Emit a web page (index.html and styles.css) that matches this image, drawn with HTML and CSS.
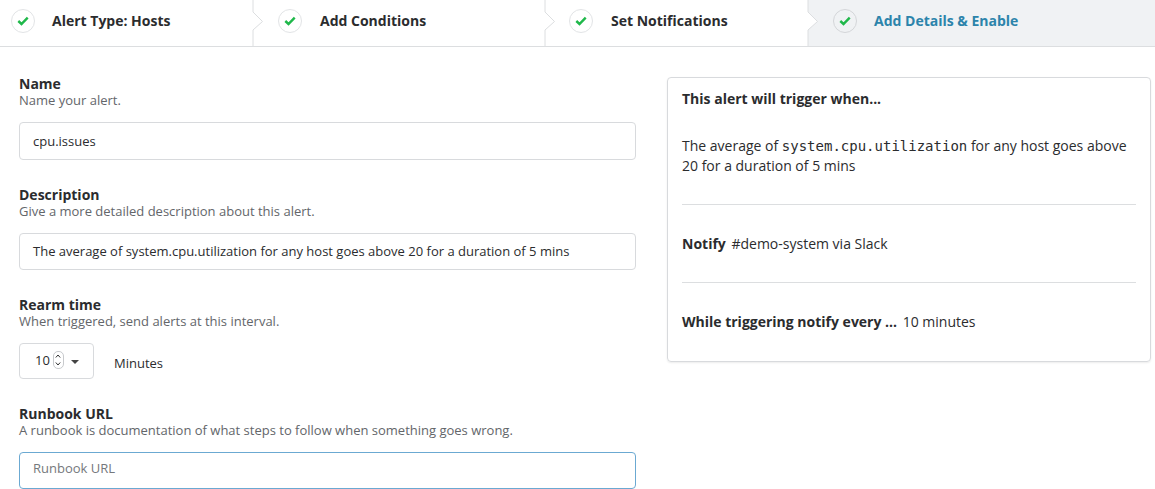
FILE: index.html
```html
<!DOCTYPE html>
<html lang="en">
<head>
<meta charset="utf-8">
<title>Add Details &amp; Enable</title>
<link rel="stylesheet" href="styles.css">
</head>
<body>
<nav class="steps">
  <div class="step step-1">
    <span class="check"><svg viewBox="0 0 12 10" width="12" height="10"><path d="M1.3 5 4.5 8 10.7 1.6" fill="none" stroke="#1fb84a" stroke-width="2.4"/></svg></span>
    <span class="step-name">Alert Type: Hosts</span>
    <svg class="chev" viewBox="0 0 12 46" width="12" height="46"><path d="M1 46V30L10.5 21.5 1 12V0" fill="#fff" stroke="#dcdee0"/></svg>
  </div>
  <div class="step step-2">
    <span class="check"><svg viewBox="0 0 12 10" width="12" height="10"><path d="M1.3 5 4.5 8 10.7 1.6" fill="none" stroke="#1fb84a" stroke-width="2.4"/></svg></span>
    <span class="step-name">Add Conditions</span>
    <svg class="chev" viewBox="0 0 12 46" width="12" height="46"><path d="M1 46V30L10.5 21.5 1 12V0" fill="#fff" stroke="#dcdee0"/></svg>
  </div>
  <div class="step step-3">
    <span class="check"><svg viewBox="0 0 12 10" width="12" height="10"><path d="M1.3 5 4.5 8 10.7 1.6" fill="none" stroke="#1fb84a" stroke-width="2.4"/></svg></span>
    <span class="step-name">Set Notifications</span>
    <svg class="chev" viewBox="0 0 12 46" width="12" height="46"><path d="M1 46V30L10.5 21.5 1 12V0" fill="#fff" stroke="#dcdee0"/></svg>
  </div>
  <div class="step step-4">
    <span class="check check-active"><svg viewBox="0 0 12 10" width="12" height="10"><path d="M1.3 5 4.5 8 10.7 1.6" fill="none" stroke="#1fb84a" stroke-width="2.4"/></svg></span>
    <span class="step-name step-name-active">Add Details &amp; Enable</span>
  </div>
</nav>
<main class="content">
  <form class="form">
    <div class="field">
      <label class="label">Name</label>
      <p class="hint">Name your alert.</p>
      <div class="input">cpu.issues</div>
    </div>
    <div class="field">
      <label class="label">Description</label>
      <p class="hint">Give a more detailed description about this alert.</p>
      <div class="input input-short">The average of system.cpu.utilization for any host goes above 20 for a duration of 5 mins</div>
    </div>
    <div class="field">
      <label class="label">Rearm time</label>
      <p class="hint">When triggered, send alerts at this interval.</p>
      <div class="rearm">
        <div class="number">
          <span>10</span>
          <span class="spinner"><svg viewBox="0 0 10 18" width="10" height="18"><path d="M2.8 6.500 5 4 7.200 6.500M2.800 11.500 5 14 7.200 11.500" fill="none" stroke="#333" stroke-width="1"/></svg></span>
          <span class="caret"></span>
        </div>
        <span class="unit">Minutes</span>
      </div>
    </div>
    <div class="field">
      <label class="label">Runbook URL</label>
      <p class="hint">A runbook is documentation of what steps to follow when something goes wrong.</p>
      <div class="input input-short input-focus">Runbook URL</div>
    </div>
  </form>
  <aside class="card">
    <h2 class="card-title">This alert will trigger when...</h2>
    <p class="card-text">The average of <code class="mono">system.cpu.utilization</code> for any host goes above 20 for a duration of 5 mins</p>
    <hr class="rule">
    <p class="card-line"><strong class="lead">Notify</strong> #demo-system via Slack</p>
    <hr class="rule">
    <p class="card-line"><strong class="lead">While triggering notify every ...</strong> 10 minutes</p>
  </aside>
</main>
</body>
</html>
```
FILE: styles.css
```css
* { box-sizing: border-box; }
html, body { margin: 0; height: 489px; overflow: hidden; background: #fff; }
body { font-family: "Open Sans", sans-serif; color: #2b2c2e; font-size: 13px; }

.steps { display: flex; height: 47px; border-bottom: 1px solid #dcdee0; }
.step { position: relative; display: flex; align-items: center; height: 46px; padding-bottom: 4px; }
.step-1 { width: 253px; padding-left: 11px; }
.step-2 { width: 292px; padding-left: 25px; }
.step-3 { width: 263px; padding-left: 24px; }
.step-4 { flex: 1; padding-left: 25px; background: #f0f2f4; }
.chev { position: absolute; right: -11px; top: 0; z-index: 1; }
.check { display: flex; align-items: center; justify-content: center; width: 24px; height: 24px; border: 1px solid #e2e4e6; border-radius: 50%; background: #fff; }
.check-active { background: #f0f2f4; border-color: #d4d6d9; }
.step-name { margin-left: 17px; margin-bottom: 2px; font-size: 14px; font-weight: 700; color: #2b2c2e; }
.step-2 .step-name { margin-left: 18px; }
.step-3 .step-name { margin-left: 18px; }
.step-name-active { margin-left: 17px; color: #2c84ab; }

.content { display: flex; align-items: flex-start; padding: 30px 4px 0 19px; gap: 31px; }
.form { width: 617px; flex: none; margin-top: -1px; }
.field { margin-bottom: 27px; }
.field:last-child { margin-bottom: 0; }
.label { display: block; font-size: 14px; font-weight: 700; line-height: 16px; color: #2b2c2e; }
.hint { margin: 0 0 14px; font-size: 13px; line-height: 16px; color: #63666a; }
.input { height: 38px; padding: 0 13px; border: 1px solid #d8dadd; border-radius: 4px; font-size: 13px; line-height: 36px; color: #2b2c2e; white-space: nowrap; }
.input-short { height: 37px; line-height: 35px; }
.input-focus { border-color: #6ba9d2; color: #75787c; line-height: 30px; }
.rearm { display: flex; align-items: center; }
.number { display: flex; align-items: center; width: 75px; height: 36px; padding: 0 0 2px 15px; border: 1px solid #d8dadd; border-radius: 4px; font-size: 13px; }
.spinner { display: flex; width: 11px; height: 18px; margin-left: 3px; border: 1px solid #c8cacd; border-radius: 5px; overflow: hidden; align-items: center; justify-content: center; flex: none; }
.spinner svg { flex: none; }
.caret { width: 0; height: 0; margin-left: 7px; margin-top: 4px; border-left: 4px solid transparent; border-right: 4px solid transparent; border-top: 4px solid #444; }
.unit { margin-left: 20px; padding-top: 4px; font-size: 13px; }

.card { flex: 1; height: 285px; padding: 11px 14px; border: 1px solid #d8dadd; border-radius: 4px; box-shadow: 0 1px 2px rgba(0,0,0,.08); }
.card-title { margin: 0 0 27px; font-size: 14px; line-height: 20px; font-weight: 700; color: #2b2c2e; }
.card-text { margin: 0 0 28px; font-size: 14px; line-height: 20px; }
.mono { font-family: "DejaVu Sans Mono", monospace; font-size: 14px; line-height: 1; }
.rule { margin: 0; border: 0; border-top: 1px solid #dcdee0; }
.card-line { margin: 29px 0 28px; font-size: 14px; line-height: 20px; }
.lead { margin-right: 2px; }
```
